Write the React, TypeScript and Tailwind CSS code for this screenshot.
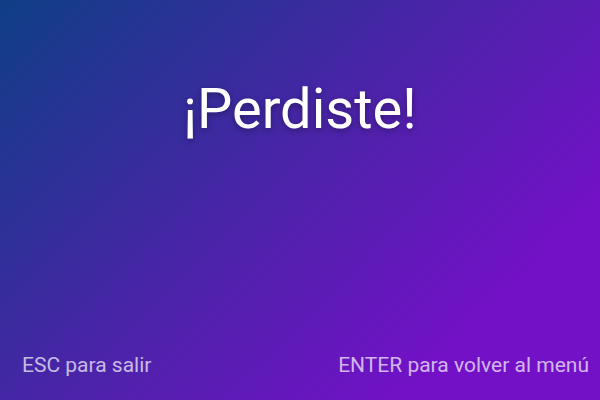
export default function App() {
  return (
    <div
      className="w-[600px] h-[400px] flex flex-col bg-[linear-gradient(135deg,#0f3e86_0%,#4a24a8_45%,#7211c6_80%,#7311c6_100%)] text-white"
      style={{ fontFamily: "Roboto, 'Noto Sans', sans-serif" }}
    >
      <div className="flex-1 flex justify-center pt-[81px]">
        <h1 className="text-[56px] leading-none font-normal [text-shadow:0_2px_6px_rgba(0,0,0,0.35)]">
          ¡Perdiste!
        </h1>
      </div>
      <div className="flex justify-between items-center pl-[22px] pr-[11px] pb-[20px] text-[21px] leading-[30px] text-white/70">
        <span>ESC para salir</span>
        <span>ENTER para volver al menú</span>
      </div>
    </div>
  );
}
